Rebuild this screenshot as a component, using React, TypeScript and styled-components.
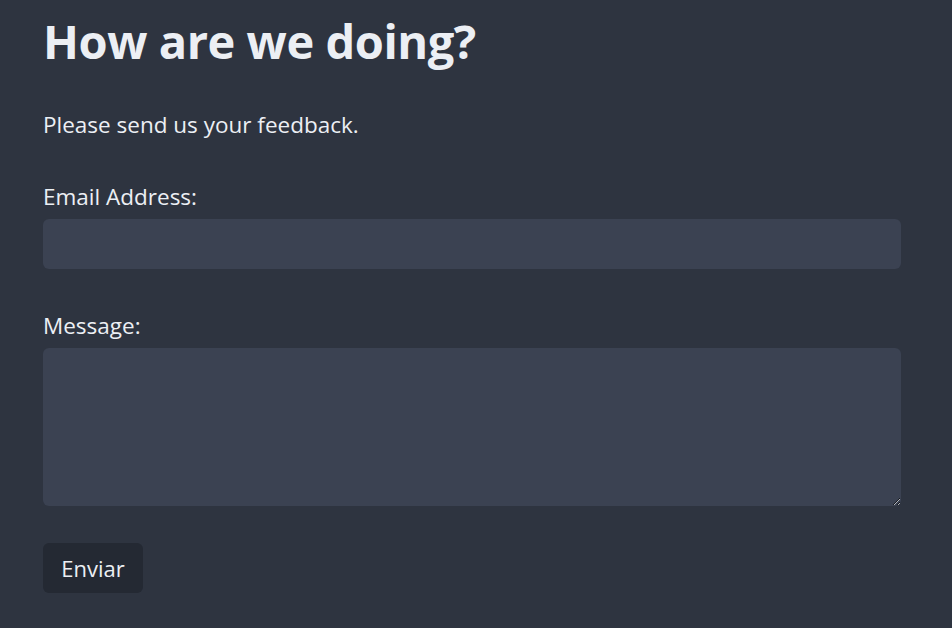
import React from "react";
import styled, { createGlobalStyle } from "styled-components";

const Global = createGlobalStyle`
  html, body { margin: 0; padding: 0; background: #2e3440; }
  body { font-family: "Open Sans", "Noto Sans", sans-serif; color: #eceff4; }
  * { box-sizing: border-box; }
`;

const Page = styled.main`
  padding: 0 51px 0 43px;
  min-height: 628px;
`;

const Title = styled.h1`
  margin: 0;
  padding-top: 11px;
  font-size: 47px;
  line-height: 60px;
  font-weight: 700;
  letter-spacing: -0.45px;
`;

const Lead = styled.p`
  margin: 40px 0 0;
  font-size: 22.5px;
  line-height: 28px;
`;

const Form = styled.form`
  display: flex;
  flex-direction: column;
  margin-top: 44px;
`;

const Label = styled.label`
  font-size: 22.5px;
  line-height: 28px;
  margin-bottom: 8px;
`;

const Field = styled.input`
  height: 50px;
  width: 100%;
  border: none;
  border-radius: 6px;
  background: #3b4252;
  color: #eceff4;
  font: inherit;
  padding: 0 12px;
  margin-bottom: 43px;
  outline: none;
`;

const Area = styled.textarea`
  height: 158px;
  width: 100%;
  border: none;
  border-radius: 6px;
  background: #3b4252;
  color: #eceff4;
  font: inherit;
  padding: 12px;
  margin-bottom: 37px;
  outline: none;
`;

const Button = styled.button`
  align-self: flex-start;
  width: 100px;
  height: 50px;
  border: none;
  border-radius: 6px;
  background: #242933;
  color: #eceff4;
  font-family: inherit;
  font-size: 22px;
  cursor: pointer;
`;

export default function App() {
  return (
    <>
      <Global />
      <Page>
        <Title>How are we doing?</Title>
        <Lead>Please send us your feedback.</Lead>
        <Form onSubmit={(e) => e.preventDefault()}>
          <Label htmlFor="email">Email Address:</Label>
          <Field id="email" type="email" />
          <Label htmlFor="msg">Message:</Label>
          <Area id="msg" />
          <Button type="submit">Enviar</Button>
        </Form>
      </Page>
    </>
  );
}
